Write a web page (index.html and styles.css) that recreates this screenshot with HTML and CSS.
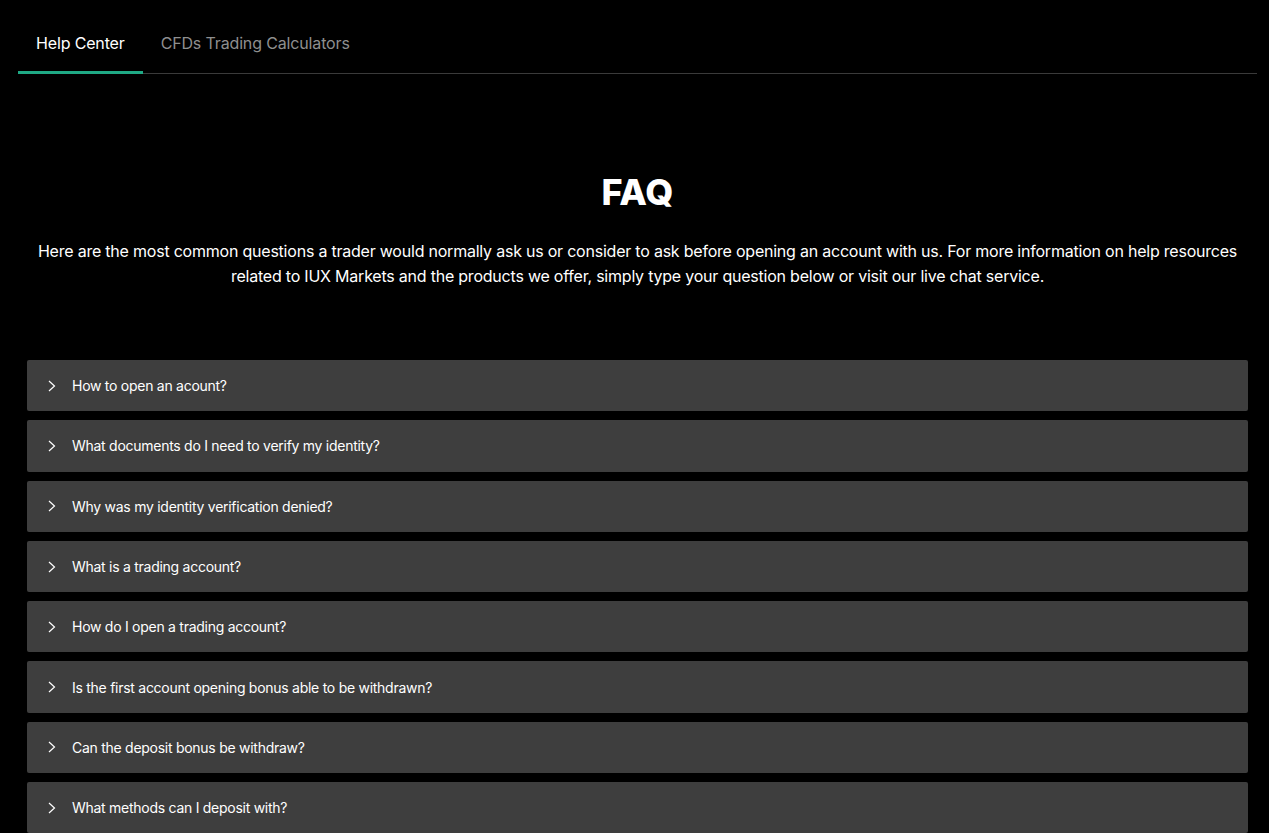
FILE: index.html
```html
<!DOCTYPE html>
<html lang="en">
<head>
    <meta charset="UTF-8">
    <meta name="viewport" content="width=device-width, initial-scale=1.0">
    <title>Help Center - FAQ</title>
    <link rel="stylesheet" href="styles.css">
</head>
<body>
    <nav class="tabs">
        <a class="tab active" href="#">Help Center</a>
        <a class="tab" href="#">CFDs Trading Calculators</a>
    </nav>

    <main class="faq">
        <h1>FAQ</h1>
        <p class="intro">Here are the most common questions a trader would normally ask us or consider to ask before opening an account with us. For more information on help resources related to IUX Markets and the products we offer, simply type your question below or visit our live chat service.</p>

        <div class="faq-list">
            <div class="faq-item">
                <svg class="chevron" viewBox="0 0 10 12"><path d="M2 1 L7.5 6 L2 11"/></svg>
                <span>How to open an acount?</span>
            </div>
            <div class="faq-item">
                <svg class="chevron" viewBox="0 0 10 12"><path d="M2 1 L7.5 6 L2 11"/></svg>
                <span>What documents do I need to verify my identity?</span>
            </div>
            <div class="faq-item">
                <svg class="chevron" viewBox="0 0 10 12"><path d="M2 1 L7.5 6 L2 11"/></svg>
                <span>Why was my identity verification denied?</span>
            </div>
            <div class="faq-item">
                <svg class="chevron" viewBox="0 0 10 12"><path d="M2 1 L7.5 6 L2 11"/></svg>
                <span>What is a trading account?</span>
            </div>
            <div class="faq-item">
                <svg class="chevron" viewBox="0 0 10 12"><path d="M2 1 L7.5 6 L2 11"/></svg>
                <span>How do I open a trading account?</span>
            </div>
            <div class="faq-item">
                <svg class="chevron" viewBox="0 0 10 12"><path d="M2 1 L7.5 6 L2 11"/></svg>
                <span>Is the first account opening bonus able to be withdrawn?</span>
            </div>
            <div class="faq-item">
                <svg class="chevron" viewBox="0 0 10 12"><path d="M2 1 L7.5 6 L2 11"/></svg>
                <span>Can the deposit bonus be withdraw?</span>
            </div>
            <div class="faq-item">
                <svg class="chevron" viewBox="0 0 10 12"><path d="M2 1 L7.5 6 L2 11"/></svg>
                <span>What methods can I deposit with?</span>
            </div>
        </div>
    </main>
</body>
</html>
```

FILE: styles.css
```css
:root {
    --bg: #000;
    --item-bg: #3e3e3e;
    --accent: #1fa985;
    --line: #3a3a3a;
    --muted: #8f8f8f;
}

* {
    margin: 0;
    padding: 0;
    box-sizing: border-box;
}

body {
    font-family: 'Inter', 'Noto Sans', sans-serif;
    background-color: var(--bg);
    color: #fff;
    overflow: hidden;
}

.tabs {
    display: flex;
    margin: 0 12px 0 18px;
    padding-top: 31px;
    border-bottom: 1px solid var(--line);
}

.tab {
    display: block;
    padding: 0 18px 16px;
    font-size: 16px;
    line-height: 24px;
    letter-spacing: -0.15px;
    color: var(--muted);
    text-decoration: none;
    border-bottom: 3px solid transparent;
    margin-bottom: -1px;
}

.tab.active {
    color: #fff;
    border-bottom-color: var(--accent);
}

.faq {
    padding: 96px 21px 0 27px;
}

.faq h1 {
    text-align: center;
    font-size: 36px;
    font-weight: 800;
    line-height: 44px;
}

.intro {
    margin-top: 25px;
    text-align: center;
    font-size: 16px;
    line-height: 25px;
    letter-spacing: -0.22px;
}

.faq-list {
    display: flex;
    flex-direction: column;
    gap: 9px;
    margin-top: 71px;
}

.faq-item {
    display: flex;
    align-items: center;
    gap: 15px;
    height: 51.3px;
    padding: 0 20px;
    background-color: var(--item-bg);
    border-radius: 2px;
    font-size: 14px;
    letter-spacing: -0.27px;
    cursor: pointer;
}

.chevron {
    width: 10px;
    height: 12px;
    fill: none;
    stroke: #fff;
    stroke-width: 1.2;
}
```
